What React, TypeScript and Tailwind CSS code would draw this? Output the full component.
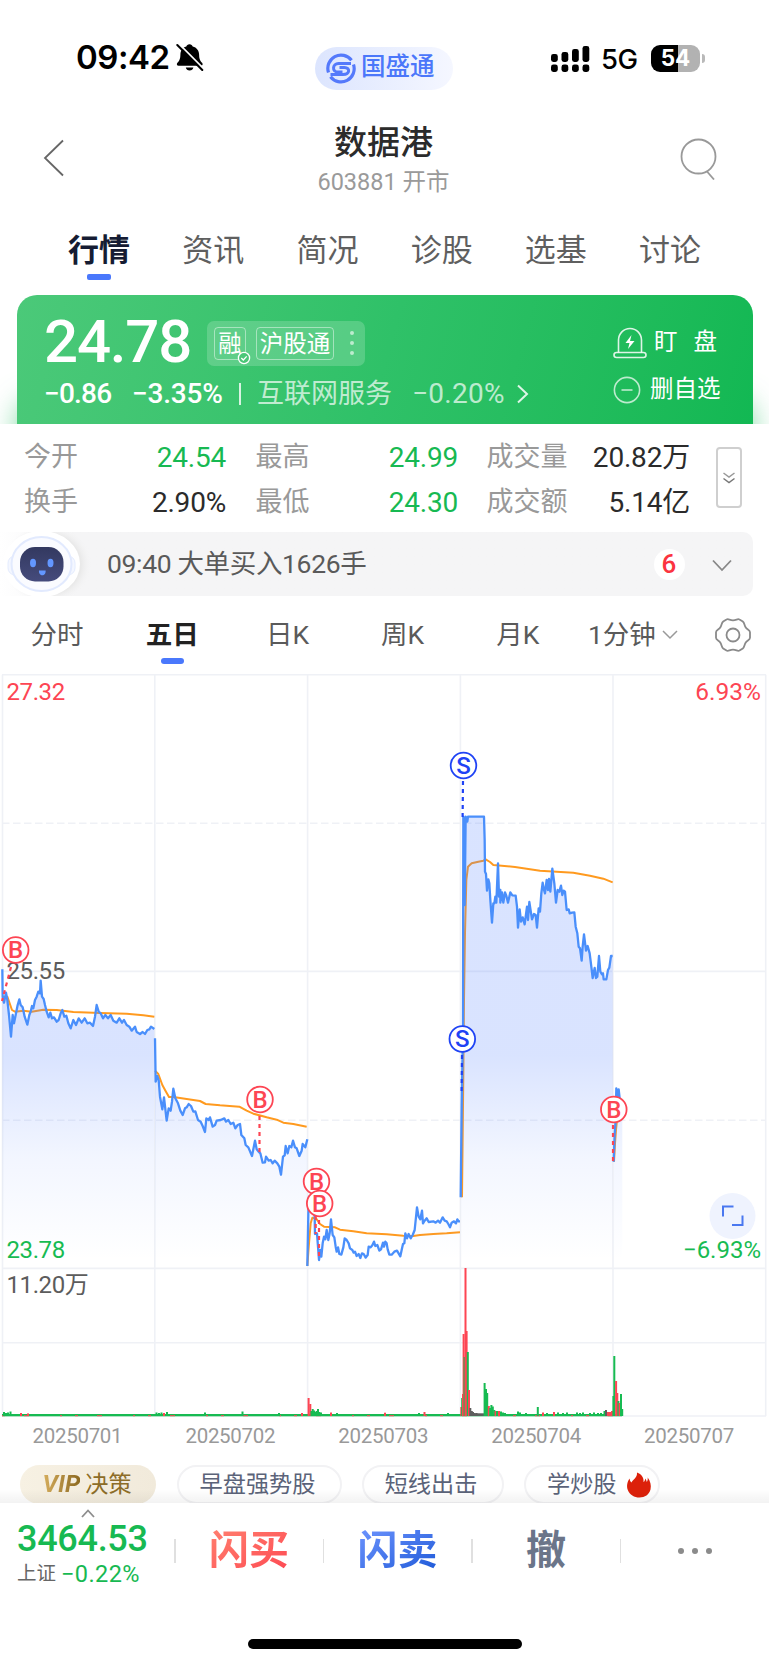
import clsx from "clsx";

type Point = [number, number];

interface Day {
  ox: number;
  oy: number;
  price: string;
  average: string;
}

const tabs = ["行情", "资讯", "简况", "诊股", "选基", "讨论"];
const periods = ["分时", "五日", "日K", "周K", "月K"];
const dates = ["20250701", "20250702", "20250703", "20250704", "20250707"];
const chips = ["早盘强势股", "短线出击"];

const RED = "#fd4553";
const GREEN = "#17bb52";
const BLUE = "#4a8ffb";
const GRID = "#eff1f6";

// Each day's trace is sampled at a third of a pixel from its own origin
const days: Day[] = [
  {
    ox: 0,
    oy: 900,
    price:
      "7,208 8,290 12,308 18,278 22,300 27,345 33,410 38,345 42,370 48,340 53,315 58,298 62,315 68,322 74,350 82,374 88,345 92,335 96,318 100,325 105,300 110,290 115,275 120,280 122,242 126,290 131,297 135,315 140,335 146,352 151,338 156,355 162,352 170,365 176,360 182,340 187,330 193,350 199,347 205,370 212,385 220,360 228,375 236,355 245,368 254,355 262,370 270,368 279,378 285,350 290,315 296,335 302,340 309,355 316,345 324,355 332,345 340,362 350,368 358,355 366,368 372,360 380,375 388,380 395,392 405,380 410,396 420,402 428,396 435,402 442,390 448,388 453,380 463,387",
    average:
      "7,290 22,290 36,330 45,335 70,332 95,335 130,329 170,330 220,336 300,339 380,341 430,346 463,350",
  },
  {
    ox: 0,
    oy: 900,
    price:
      "465,415 467,545 472,528 476,540 480,590 487,628 492,592 500,662 506,625 512,632 516,605 520,566 526,595 534,610 541,632 548,645 555,625 560,622 566,612 573,618 580,635 586,634 594,660 602,665 608,678 615,696 619,655 626,660 630,652 638,680 645,675 650,662 662,660 673,655 678,665 685,660 692,672 700,668 706,685 713,675 720,672 724,705 733,715 737,735 745,742 756,768 765,722 770,748 776,755 781,760 788,788 795,787 798,770 806,782 812,780 818,790 824,782 832,790 838,800 843,824 849,770 854,766 857,738 863,760 868,738 874,742 879,722 885,742 890,745 898,768 905,752 908,732 916,742 922,718",
    average:
      "465,512 475,522 487,555 498,575 507,591 520,591 560,597 600,603 617,612 660,616 718,620 740,632 760,641 800,652 830,659 850,668 880,672 920,680",
  },
  {
    ox: 300,
    oy: 1100,
    price:
      "22,498 25,340 27,290 40,290 44,350 45,402 51,400 54,440 57,480 61,450 64,470 68,430 72,410 76,418 80,390 85,420 89,400 93,358 98,405 103,412 107,440 110,455 114,442 118,462 124,464 130,442 134,415 140,420 146,430 150,445 157,450 161,458 165,455 170,468 176,462 181,474 186,460 191,462 197,473 203,465 206,440 212,442 217,436 222,425 226,438 232,435 238,452 243,448 249,428 252,440 256,425 260,430 263,448 268,464 275,464 283,455 291,452 301,469 305,450 309,432 313,430 316,400 321,415 326,402 332,415 338,405 344,390 351,322 356,350 361,358 366,332 369,370 374,362 380,355 386,366 400,364 407,368 414,362 420,368 428,352 434,362 440,364 445,372 450,382 455,368 462,364 468,370 472,358 476,364 480,364",
    average:
      "22,498 27,430 32,370 37,353 48,355 60,372 72,380 105,382 120,389 160,394 200,400 260,403 310,407 340,408 360,405 400,402 440,400 480,397",
  },
  {
    ox: 440,
    oy: 740,
    price:
      "62,1372 65,1100 69,860 70,230 74,495 77,230 82,245 84,230 132,230 134,300 135,395 138,402 141,452 145,418 148,430 151,480 156,548 160,490 163,490 166,470 169,488 174,370 177,470 181,450 181,488 186,457 190,488 195,457 199,467 204,488 211,457 217,466 227,467 231,500 234,563 239,508 243,545 248,532 254,553 261,500 264,540 268,486 276,538 282,522 287,525 291,563 296,505 300,515 304,460 308,428 312,450 315,460 320,420 324,450 327,417 331,455 337,386 343,430 348,488 353,450 358,455 363,437 367,465 371,452 375,455 380,510 386,508 389,520 396,518 403,517 407,560 412,580 416,620 420,625 425,662 428,620 432,583 438,632 443,618 449,640 454,680 458,714 464,684 468,714 472,710 477,648 481,695 486,703 489,700 491,718 499,718 504,690 508,683 513,648 518,648",
    average:
      "66,1372 70,1000 72,780 75,580 79,420 84,380 95,370 115,365 130,362 137,358 150,366 160,375 225,381 300,392 400,398 450,407 490,416 518,427",
  },
  {
    ox: 440,
    oy: 1020,
    price: "521,425 524,340 527,300 529,205 533,228 536,208 539,235",
    average: "522,425 525,370 528,330 533,280",
  },
];

const markers: { kind: "B" | "S"; x: number; y: number; from: Point; to: Point }[] = [
  { kind: "B", x: 15.7, y: 950, from: [11, 967], to: [2, 1001] },
  { kind: "B", x: 260, y: 1099.5, from: [259.5, 1116], to: [259.5, 1152] },
  { kind: "B", x: 316.5, y: 1181.5, from: [315.7, 1200], to: [315.7, 1234] },
  { kind: "B", x: 319.7, y: 1203.5, from: [319, 1220], to: [319, 1256] },
  { kind: "S", x: 463.5, y: 765.5, from: [463, 781], to: [462.6, 817] },
  { kind: "S", x: 462.3, y: 1039, from: [462, 1055], to: [461.6, 1091] },
  { kind: "B", x: 613.8, y: 1109.5, from: [613, 1125], to: [613, 1162] },
];

// x, height, colour
const volumes: [number, number, string][] = [
  [3, 4, GREEN], [5, 3, GREEN], [7, 3.5, GREEN], [9.5, 4.5, GREEN], [20, 3, RED], [27, 2.6, RED],
  [155.5, 3.5, GREEN], [158, 3, GREEN], [160.5, 3.5, GREEN], [163, 3, RED], [166, 4, GREEN],
  [204, 3.5, GREEN], [241.5, 4.5, GREEN], [278, 3, GREEN], [301, 3, RED],
  [307.6, 18, RED], [309.3, 12, RED], [310.5, 5, GREEN], [311.7, 7, GREEN], [313, 5.5, GREEN],
  [314.3, 4, GREEN], [315.6, 5, GREEN], [317, 7, GREEN], [318.3, 4, GREEN], [320, 3.5, GREEN],
  [330, 3.5, RED], [336, 3, GREEN], [384, 3.3, RED], [423.5, 4, RED], [418, 3, GREEN], [447, 3, GREEN],
  [460.3, 9, RED], [461.2, 18, GREEN], [462, 22, RED], [462.6, 82, RED], [463.6, 59, GREEN],
  [464.5, 148, RED], [465.6, 85, RED], [466.8, 64, GREEN], [468, 26, RED], [469.3, 8, "#5e5e5e"],
  [470.8, 5, "#5e5e5e"], [472, 4, "#5e5e5e"], [473.5, 3, "#5e5e5e"], [475.5, 3, "#5e5e5e"], [483.6, 33, GREEN],
  [485, 27, GREEN], [486.2, 23, GREEN], [487.8, 10, RED], [489.2, 8, GREEN], [490.4, 11, GREEN],
  [491.8, 9.5, GREEN], [493.3, 6, GREEN], [494.6, 5, RED], [496, 5, GREEN], [498, 5, RED],
  [500, 4.5, GREEN], [502, 3.5, GREEN], [504, 3, GREEN], [517, 4.5, GREEN], [519, 3.5, GREEN],
  [525, 3, GREEN], [536.8, 9, GREEN], [542, 3.5, RED], [546, 3, GREEN], [553, 4, RED], [557, 3.5, GREEN],
  [562, 3, GREEN], [566, 3.5, GREEN], [576, 3.5, GREEN], [579, 3, GREEN], [582, 3.5, GREEN],
  [589, 3, GREEN], [593, 3.5, GREEN], [597, 3, GREEN], [600, 3, GREEN], [603.5, 5, GREEN],
  [605, 6, "#5e5e5e"], [607, 4, RED], [609, 4, RED], [611, 5, RED], [612.4, 20, GREEN],
  [613.3, 60, GREEN], [615.1, 35, RED], [616.3, 23, RED], [617.4, 15, GREEN], [618.6, 13, RED],
  [620, 22, GREEN], [621.2, 7, GREEN],
];

function parse(day: Day, raw: string): Point[] {
  return raw.split(" ").map((pair) => {
    const [x, y] = pair.split(",").map(Number);
    return [day.ox + x / 3, day.oy + y / 3];
  });
}

function StatusBar() {
  return (
    <div className="flex h-[104px] shrink-0 items-start">
      <div className="flex w-[315px] items-center gap-[7px] pt-[36px] pl-[76px]">
        <span className="font-['Inter'] text-[33px] leading-[42px] font-semibold tracking-[-0.500px] text-black">
          09:42
        </span>
        <svg width="28" height="28" viewBox="0 0 28 28" className="shrink-0">
          <path
            d="M13.500 1.200c1.700 0 2.900 1 3.200 2.300 4 1 6.300 4 6.400 8 .1 5 1.300 6.500 3 8.300 1 1.200.6 3-1.200 3H2.600c-1.800 0-2.200-1.800-1.200-3 1.700-1.800 2.900-3.300 3-8.300.1-4 2.100-7 5.900-8C10.600 2.200 11.800 1.200 13.500 1.200Z"
            fill="#000"
          />
          <path d="M9.800 24.500h7.600c-.4 1.800-1.800 3-3.800 3s-3.400-1.200-3.800-3Z" fill="#000" />
          <path d="M2.700 .7 27.500 25.500" stroke="#fff" strokeWidth="1.800" />
          <path d="M1.300 2 26.300 27" stroke="#000" strokeWidth="2" strokeLinecap="round" />
        </svg>
      </div>
      <div className="mt-[47px] flex h-[43px] w-[138px] items-center gap-[5px] rounded-full bg-linear-to-r from-[#dce5fe] to-[#f5f7ff] pl-[11px]">
        <svg width="30" height="31" viewBox="0 0 30 31" fill="none" stroke="#5479fb" className="shrink-0">
          <path d="M2.500 19.500A13.200 13.200 0 0 1 25.500 7.300" strokeWidth="3.200" />
          <path d="M27.500 11.500A13.200 13.200 0 0 1 4.500 23.700" strokeWidth="3.200" />
          <path d="M25 10.500H12.500c-6 0-7 8.500-.5 8.500h4.500" strokeWidth="3" />
          <path d="M4.500 21.500H17c7 0 7.500-7 1.500-7h-5" strokeWidth="3" />
        </svg>
        <span className="mt-[-2px] text-[24.500px] leading-none font-medium whitespace-nowrap text-[#4b77fa]">国盛通</span>
      </div>
      <div className="flex items-center pt-[42px] pl-[98px]">
        <svg width="40" height="28" viewBox="0 0 40 28" className="shrink-0">
          <rect x="0" y="10" width="6.800" height="8" rx="2.400" />
          <rect x="10.500" y="8" width="6.800" height="10" rx="2.400" />
          <rect x="21" y="5" width="6.800" height="13" rx="2.400" />
          <rect x="31.500" y="2" width="6.800" height="16" rx="2.400" />
          <rect x="0" y="20.500" width="6.800" height="7.500" rx="2.400" />
          <rect x="10.500" y="20.500" width="6.800" height="7.500" rx="2.400" />
          <rect x="21" y="20.500" width="6.800" height="7.500" rx="2.400" />
          <rect x="31.500" y="20.500" width="6.800" height="7.500" rx="2.400" />
        </svg>
        <span className="mt-[2px] ml-[10px] w-[50px] font-['Inter'] text-[27.500px] leading-[30px] font-medium tracking-[-0.500px] text-black">
          5G
        </span>
        <div className="mt-[1px] flex h-[27px] w-[49px] shrink-0 items-center justify-center rounded-[9px] bg-linear-to-r from-black from-56% to-[#b2b2b2] to-56%">
          <span className="font-['Inter'] text-[22.500px] leading-none font-bold text-white">54</span>
        </div>
        <div className="ml-[2px] h-[9px] w-[3px] rounded-r-full bg-[#b9b9b9]" />
      </div>
    </div>
  );
}

function Header() {
  return (
    <div className="flex h-[111px] shrink-0 items-center justify-between pr-[51px] pl-[43px]">
      <svg width="22" height="38" viewBox="0 0 22 38" className="mt-[-3px]" fill="none" stroke="#666" strokeWidth="1.800">
        <path d="M20 1.500 2 19l18 17.500" />
      </svg>
      <div className="flex flex-col items-center pt-[7px] pl-[22px]">
        <span className="text-[33px] leading-[42px] font-medium text-[#2b2b2b]">数据港</span>
        <span className="mt-[4px] mb-[8px] text-[23.500px] leading-[28px] text-[#9a9a9a]">603881 开市</span>
      </div>
      <svg width="38" height="42" viewBox="0 0 38 42" className="mt-[-2px]" fill="none" stroke="#999" strokeWidth="1.800">
        <circle cx="18.500" cy="18.500" r="17" />
        <path d="m27 33.500 7 8" />
      </svg>
    </div>
  );
}

function QuoteCard() {
  return (
    <div className="shrink-0 overflow-hidden px-[16.500px]">
      <div className="flex h-[129px] justify-between rounded-t-[20px] bg-linear-105 from-[#4bc979] via-[#2fc168] to-[#12b853] pl-[27.500px] text-white shadow-[0_105px_28px_0_#4cc97db0]">
        <div className="flex flex-col">
          <div className="flex h-[80px] items-center pt-[14px]">
            <span className="w-[163px] text-[60px] leading-[60px] font-medium tracking-[-1.200px]">24.78</span>
            <div className="mt-[2px] flex h-[45px] w-[158px] items-center rounded-[7px] bg-white/18 pl-[7px]">
              <div className="relative flex h-[33px] w-[32px] items-center justify-center rounded-[4px] border border-white/45 pt-[3px] text-[23.500px] leading-none">
                融
                <svg className="absolute right-[-6px] bottom-[-6px]" width="14" height="14" viewBox="0 0 14 14" fill="#4bc777" stroke="#fff" strokeWidth="1.300">
                  <circle cx="7" cy="7" r="5.600" />
                  <path d="m4.300 7 2 2 3.400-3.600" fill="none" />
                </svg>
              </div>
              <div className="ml-[10px] flex h-[33px] w-[78px] items-center justify-center rounded-[4px] border border-white/45 pt-[3px] text-[23.500px] leading-none">
                沪股通
              </div>
              <div className="ml-[16px] flex flex-col gap-[6px]">
                <i className="size-[4px] rounded-full bg-white/60" />
                <i className="size-[4px] rounded-full bg-white/60" />
                <i className="size-[4px] rounded-full bg-white/60" />
              </div>
            </div>
          </div>
          <div className="flex h-[38px] items-center text-[28px] leading-none whitespace-nowrap">
            <span className="w-[88px] font-medium tracking-[-0.800px]">−0.86</span>
            <span className="w-[107px] font-medium tracking-[-0.200px]">−3.35%</span>
            <span className="mr-[16px] h-[22px] w-[2px] bg-white/80" />
            <span className="w-[155px] text-[27px] text-white/70">互联网服务</span>
            <span className="w-[104px] tracking-[0.300px] text-white/70">−0.20%</span>
            <svg width="13" height="20" viewBox="0 0 13 20" fill="none" stroke="#fff" strokeOpacity=".85" strokeWidth="2">
              <path d="m2 1.500 9 8.500-9 8.500" />
            </svg>
          </div>
        </div>
        <div className="flex w-[139.500px] flex-col text-[23.500px] leading-none">
          <div className="flex h-[72px] items-end">
            <div className="flex h-[48px] items-center">
              <svg width="34" height="32" viewBox="0 0 34 32" fill="none" stroke="#fff" strokeOpacity=".85" strokeWidth="1.600">
                <path d="M5.500 25.500V13a11.500 11.500 0 0 1 23 0v12.500" />
                <path d="M3.500 25.500h27a2.400 2.400 0 0 1 0 5h-27a2.400 2.400 0 0 1 0-5Z" />
                <path d="m18.500 8-6 8h4l-1.500 6 6.500-8h-4.500Z" fill="#fff" stroke="none" />
              </svg>
              <span className="ml-[7px]">盯</span>
              <span className="ml-[16px]">盘</span>
            </div>
          </div>
          <div className="flex h-[45px] items-center">
            <svg width="28" height="28" viewBox="0 0 28 28" fill="none" stroke="#fff" strokeOpacity=".7" strokeWidth="1.600">
              <circle cx="14" cy="14" r="12.600" />
              <path d="M8.500 14h11" />
            </svg>
            <span className="ml-[9px]">删自选</span>
          </div>
        </div>
      </div>
    </div>
  );
}

function Stat({ label, value, green }: { label: string; value: string; green?: boolean }) {
  return (
    <div className="flex items-center justify-between">
      <span className="text-[27px] text-[#999]">{label}</span>
      <span className={clsx("text-[28px] tracking-[-0.200px]", green ? "text-[#17b952]" : "text-[#2b2b2b]")}>
        {value}
      </span>
    </div>
  );
}

function Stats() {
  return (
    <div className="flex h-[108px] shrink-0 pt-[11px] pl-[24px] leading-[45px]">
      <div className="w-[202px]">
        <Stat label="今开" value="24.54" green />
        <Stat label="换手" value="2.90%" />
      </div>
      <div className="ml-[29.500px] w-[202.500px]">
        <Stat label="最高" value="24.99" green />
        <Stat label="最低" value="24.30" green />
      </div>
      <div className="ml-[28.500px] w-[203.500px]">
        <Stat label="成交量" value="20.82万" />
        <Stat label="成交额" value="5.14亿" />
      </div>
      <div className="mt-[12px] ml-[26px] flex h-[61px] w-[26px] items-center justify-center rounded-[4px] border-2 border-[#cfcfcf]">
        <svg width="14" height="14" viewBox="0 0 14 14" fill="none" stroke="#999" strokeWidth="1.500">
          <path d="m1.500 2 5.500 4 5.500-4" />
          <path d="m1.500 7.500 5.500 4 5.500-4" stroke="#777" />
        </svg>
      </div>
    </div>
  );
}

function RobotBar() {
  return (
    <div className="mr-[16.500px] flex h-[64px] shrink-0 items-center overflow-hidden rounded-r-[10px] bg-linear-to-r from-white to-[#f5f5f6] to-10%">
      <svg width="107" height="64" viewBox="0 0 107 64" className="shrink-0">
        <defs>
          <radialGradient id="shade">
            <stop offset="75%" stopColor="#e9e9e9" />
            <stop offset="100%" stopColor="#f5f5f6" stopOpacity="0" />
          </radialGradient>
          <linearGradient id="face" x1="0" y1="0" x2="0" y2="1">
            <stop offset="0" stopColor="#333960" />
            <stop offset="1" stopColor="#454b7c" />
          </linearGradient>
        </defs>
        <ellipse cx="48" cy="32" rx="44" ry="40" fill="url(#shade)" />
        <ellipse cx="41.500" cy="32" rx="38.500" ry="33" fill="#fff" />
        <rect x="8" y="24" width="67" height="19" rx="7" fill="#f4f7ff" stroke="#e4ecfe" />
        <ellipse cx="41.500" cy="32" rx="30" ry="27" fill="#fafbff" stroke="#e2eafe" strokeWidth="2" />
        <rect x="20" y="15" width="43.500" height="34.500" rx="15" fill="url(#face)" />
        <ellipse cx="33" cy="31" rx="3" ry="4.200" fill="#6397ff" />
        <ellipse cx="50.500" cy="31" rx="3" ry="4.200" fill="#6397ff" />
        <path d="M39 38.500h6.600c.4 3-1.400 4.800-3.300 4.800s-3.700-1.800-3.300-4.800Z" fill="#6397ff" />
      </svg>
      <span className="text-[26.500px] tracking-[-0.350px] text-[#5a5a5a]">09:40 大单买入1626手</span>
      <span className="ml-auto flex size-[31px] items-center justify-center rounded-full bg-white text-[26px] leading-none font-medium text-[#fb3340]">
        6
      </span>
      <svg width="20" height="13" viewBox="0 0 20 13" className="mt-[3px] mr-[21px] ml-[27px]" fill="none" stroke="#888" strokeWidth="1.800">
        <path d="m1 1.500 9 9.500 9-9.500" />
      </svg>
    </div>
  );
}

function PeriodTabs() {
  return (
    <div className="flex h-[78px] shrink-0 items-start text-[26.500px] leading-[36px] text-[#5a5a5a]">
      {periods.map((name) => (
        <div key={name} className="flex w-[115.200px] flex-col items-center pt-[21px] pr-[1px]">
          <span className={clsx(name === "五日" && "font-bold text-[#222]")}>{name}</span>
          {name === "五日" && <span className="mt-[5px] h-[6px] w-[23px] rounded-[3px] bg-[#4a78fc]" />}
        </div>
      ))}
      <div className="flex items-center pt-[21px] pl-[12px]">
        <span>1分钟</span>
        <svg width="16" height="10" viewBox="0 0 16 10" className="ml-[6px]" fill="none" stroke="#999" strokeWidth="1.500">
          <path d="m1 1 7 7 7-7" />
        </svg>
      </div>
      <svg width="38" height="36" viewBox="0 0 38 36" className="mt-[21px] mr-[17px] ml-auto" fill="none" stroke="#8a8a8a" strokeWidth="1.800">
        <path
          d="M12.500 2.500c1.800-1.200 3 .8 6.500.8s4.700-2 6.500-.8l3.300 2c1.700 1.200 1.400 3.500 2.800 5.800s4.400 2.700 4.400 5v5.400c0 2.300-3 2.700-4.400 5s-1.100 4.600-2.800 5.800l-3.300 2c-1.800 1.200-3-.8-6.500-.8s-4.700 2-6.500.8l-3.300-2c-1.700-1.200-1.400-3.500-2.800-5.800s-4.400-2.700-4.400-5v-5.400c0-2.300 3-2.700 4.400-5s1.100-4.600 2.800-5.800Z"
        />
        <circle cx="19" cy="18" r="6.500" />
      </svg>
    </div>
  );
}

function Chart() {
  const columns = [2.5, 154.8, 307.6, 460.4, 613, 765.7];
  return (
    <svg width="769" height="743" viewBox="0 674 769 743" className="shrink-0 font-['Roboto','Noto_Sans_CJK_SC',sans-serif]">
      <defs>
        <linearGradient id="area" gradientUnits="userSpaceOnUse" x1="0" y1="1055" x2="0" y2="1260">
          <stop offset="0" stopColor="#4b7bff" stopOpacity=".21" />
          <stop offset=".5" stopColor="#4b7bff" stopOpacity=".07" />
          <stop offset="1" stopColor="#4b7bff" stopOpacity="0" />
        </linearGradient>
      </defs>
      <g stroke={GRID} strokeWidth="1.600">
        {columns.map((x) => (
          <path key={x} d={`M${x} 674.800V1416`} />
        ))}
        {[674.8, 971.4, 1268.4, 1342.8, 1416].map((y) => (
          <path key={y} d={`M2 ${y}H766`} />
        ))}
        <path d="M2 823.300H766M2 1120.300H766" strokeDasharray="7.500 3.500" />
      </g>

      {days.map((day, i) => {
        const price = parse(day, day.price);
        const right = i === 4 ? 622.3 : price[price.length - 1][0];
        const line = price.map((p) => p.join(",")).join(" ");
        return (
          <g key={i} fill="none" strokeLinejoin="round">
            <polyline points={parse(day, day.average).map((p) => p.join(",")).join(" ")} stroke="#ff9a1f" strokeWidth="2" />
            <polygon points={`${line} ${right},${price[price.length - 1][1]} ${right},1268 ${price[0][0]},1268`} fill="url(#area)" />
            <polyline points={line} stroke={BLUE} strokeWidth="2.300" />
          </g>
        );
      })}

      <rect x="2" y="1414" width="620" height="2.300" fill={GREEN} />
      <path d="M2 1415.700H620" stroke={RED} strokeWidth="1" strokeDasharray="3 19 5 31 2 13" />
      <path d="M470 1414.600H484" stroke="#5e5e5e" strokeWidth="2.600" />
      {volumes.map(([x, h, color], i) => (
        <rect key={i} x={x} y={1416 - h} width="2" height={h} fill={color} />
      ))}

      <g fontSize="24" letterSpacing="-0.4">
        <text x="6.500" y="699.500" fill={RED}>27.32</text>
        <text x="761" y="699.500" textAnchor="end" fontSize="24.500" letterSpacing="0" fill={RED}>6.93%</text>
        <text x="6.500" y="978.500" fill="#5c5c5c">25.55</text>
        <text x="6.500" y="1257.800" fill={GREEN}>23.78</text>
        <text x="6.500" y="1293.300" fill="#5c5c5c">11.20万</text>
      </g>

      {markers.map((m, i) => {
        const color = m.kind === "B" ? RED : "#1f43f5";
        return (
          <g key={i} stroke={color}>
            <path d={`M${m.from.join(" ")}L${m.to.join(" ")}`} strokeWidth="2.200" strokeDasharray="4 4" />
            <circle cx={m.x} cy={m.y} r="12.800" fill="#fff" strokeWidth="1.800" />
            <text x={m.x} y={m.y + 8.3} textAnchor="middle" fontSize="24" fontWeight="500" fill={color} stroke="none">
              {m.kind}
            </text>
          </g>
        );
      })}

      <circle cx="732.500" cy="1216" r="23" fill="#eff3fe" />
      <path d="M723 1216.500V1206.500H733.500M742.500 1215.500V1225H732" fill="none" stroke="#4a78f0" strokeWidth="2" />
      <text x="761" y="1257.800" fontSize="24" textAnchor="end" fill={GREEN}>−6.93%</text>
    </svg>
  );
}

function ChipRow() {
  return (
    <div className="relative h-[47px] shrink-0 overflow-hidden">
      <div className="flex pt-[9px] pl-[20px] text-[23.200px] leading-none whitespace-nowrap text-[#5b6379]">
        <div className="flex h-[39px] w-[136px] items-center justify-center gap-[5px] rounded-full bg-linear-to-r from-[#f7f1e3] to-[#f1eadb] pr-[2px] text-[#8d6d28]">
          <span className="bg-linear-to-r from-[#d8b05f] to-[#8d6a20] bg-clip-text text-[24.500px] font-bold text-transparent italic">
            VIP
          </span>
          决策
        </div>
        {chips.map((chip, i) => (
          <div
            key={chip}
            className={clsx(
              "flex h-[39px] items-center justify-center rounded-full border-2 border-[#f2f2f4]",
              i === 0 ? "ml-[21px] w-[165px] pr-[4px]" : "ml-[20px] w-[142px] pr-[4px]",
            )}
          >
            {chip}
          </div>
        ))}
        <div className="ml-[20px] flex h-[39px] w-[136px] items-center gap-[9px] rounded-full border-2 border-[#f2f2f4] pl-[21px]">
          学炒股
          <svg width="26" height="26" viewBox="0 0 26 26" className="shrink-0">
            <path
              d="M11 .5c4.500 1.500 7 5 6.500 9.500 1.200-.8 1.700-2 1.600-3.600 1 1 1.500 2.200 1.600 3.600.8-.8 1.200-2.200 1-4.400 2.600 3.400 3.800 7.600 2.800 12-1.200 5-5.700 8-11 8S3.700 22.700 1.800 18C.3 13.800 1.300 9.600 3.600 6.400c.2 1.900.8 3.200 1.900 4C6.600 7.800 11.500 6 11 .5Z"
              fill="#dc210a"
            />
          </svg>
        </div>
      </div>
      <div className="absolute inset-x-0 bottom-0 h-[14px] bg-linear-to-b from-transparent to-black/5" />
    </div>
  );
}

function TradeBar() {
  const divider = "h-[24px] w-[1.500px] shrink-0 bg-[#e0e0e0]";
  return (
    <div className="flex h-[96px] shrink-0 items-center bg-white">
      <div className="flex w-[174px] flex-col pb-[6px] pl-[17px]">
        <svg width="14" height="9" viewBox="0 0 14 9" className="mb-[1px] ml-[64px]" fill="none" stroke="#8d8d8d" strokeWidth="1.800">
          <path d="m1 8 6-6.500L13 8" />
        </svg>
        <span className="text-[36px] leading-[40px] font-medium tracking-[-0.300px] text-[#17b952]">3464.53</span>
        <div className="mt-[2px] flex items-center text-[23.500px] leading-[26px] text-[#17b952]">
          <span className="mr-[5px] text-[19.500px] text-[#666]">上证</span>
          <span className="tracking-[0.400px]">−0.22%</span>
        </div>
      </div>
      <span className={divider} />
      <div className="flex w-[147px] justify-center">
        <span className="bg-linear-to-br from-[#ff8070] to-[#fd4451] bg-clip-text text-[40px] leading-[50px] font-bold text-transparent">闪买</span>
      </div>
      <span className={divider} />
      <div className="flex w-[147px] justify-center">
        <span className="bg-linear-to-br from-[#6f95ff] to-[#1656d6] bg-clip-text text-[40px] leading-[50px] font-bold text-transparent">闪卖</span>
      </div>
      <span className={divider} />
      <div className="flex w-[147px] justify-center">
        <span className="text-[40px] leading-[50px] font-bold text-[#6b7589]">撤</span>
      </div>
      <span className={divider} />
      <div className="flex w-[147px] justify-center gap-[8px]">
        <i className="size-[6px] rounded-full bg-[#8b8b8b]" />
        <i className="size-[6px] rounded-full bg-[#8b8b8b]" />
        <i className="size-[6px] rounded-full bg-[#8b8b8b]" />
      </div>
    </div>
  );
}

export default function App() {
  return (
    <div className="flex h-[1665px] w-[769px] flex-col overflow-hidden bg-white font-['Roboto','Noto_Sans_CJK_SC',sans-serif]">
      <StatusBar />
      <Header />
      <div className="flex h-[80px] shrink-0 pl-[42.500px]">
        {tabs.map((tab, i) => (
          <div key={tab} className="flex w-[114.200px] flex-col items-center pt-[15px] pr-[1px]">
            <span className={clsx("text-[31px] leading-[42px]", i === 0 ? "font-bold text-[#151c33]" : "text-[#5f5f5f]")}>
              {tab}
            </span>
            {i === 0 && <span className="mt-[2px] h-[6px] w-[24px] rounded-[2px] bg-[#4a78fc]" />}
          </div>
        ))}
      </div>
      <QuoteCard />
      <Stats />
      <RobotBar />
      <PeriodTabs />
      <Chart />
      <div className="flex h-[39px] shrink-0 px-[1px] text-[20.500px] leading-[38px] tracking-[-0.300px] text-[#999]">
        {dates.map((date) => (
          <span key={date} className="w-[152.900px] text-center">
            {date}
          </span>
        ))}
      </div>
      <ChipRow />
      <TradeBar />
      <div className="mx-auto mt-[40px] h-[10px] w-[274px] shrink-0 rounded-full bg-black" />
    </div>
  );
}
